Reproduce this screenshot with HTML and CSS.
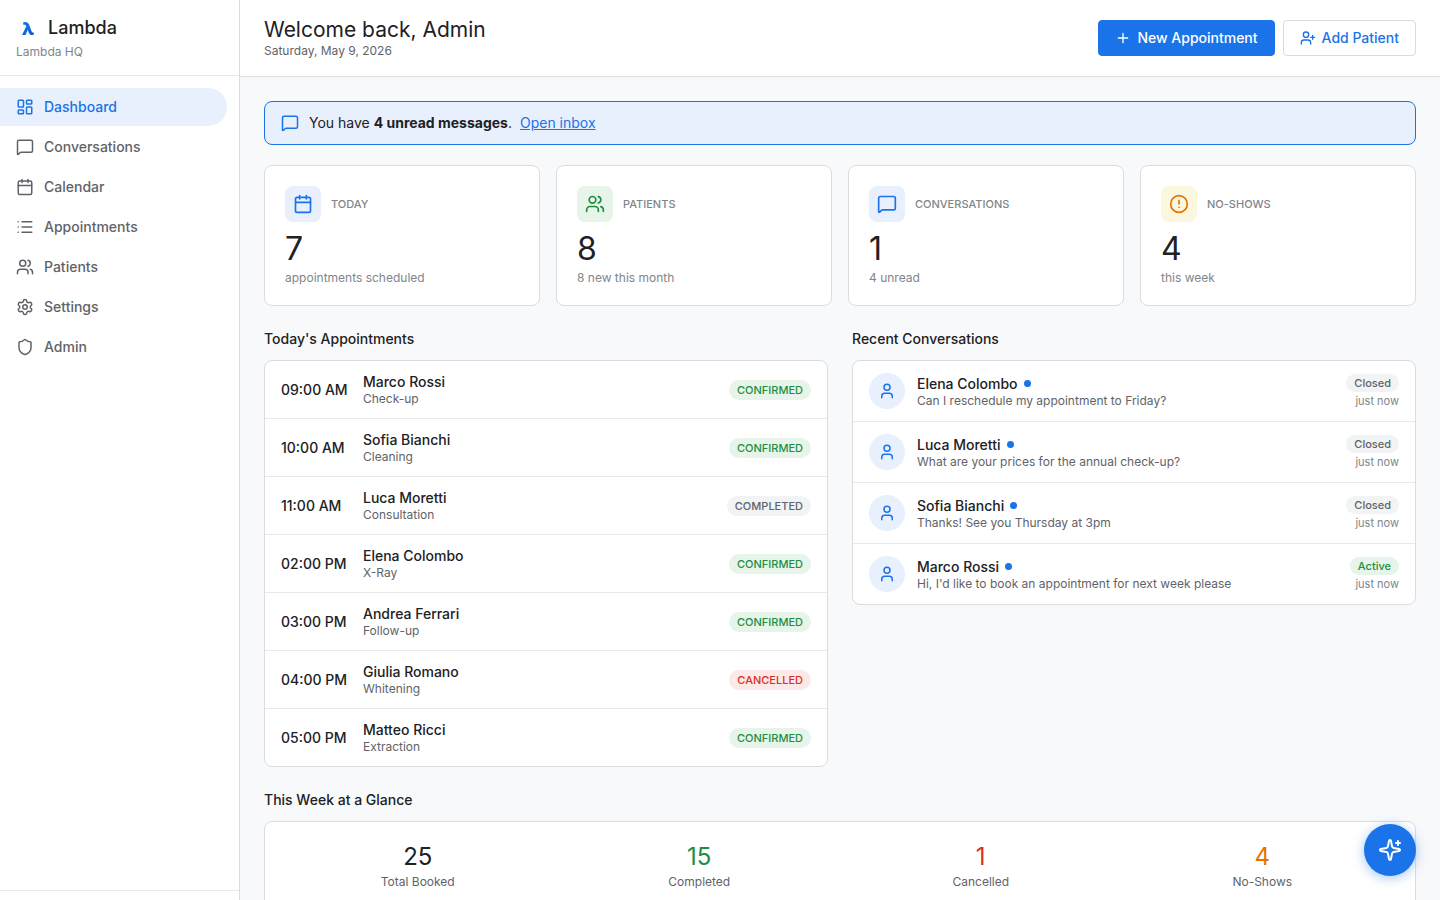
FILE: index.html
```
<!DOCTYPE html>
<html lang="en">
<head>
<meta charset="utf-8">
<meta name="viewport" content="width=device-width, initial-scale=1">
<title>Dashboard - Lambda</title>
<link rel="stylesheet" href="styles.css">
</head>
<body>

<svg class="sprite" aria-hidden="true">
  <symbol id="i-dashboard" viewBox="0 0 24 24"><rect width="7" height="9" x="3" y="3" rx="1"/><rect width="7" height="5" x="14" y="3" rx="1"/><rect width="7" height="9" x="14" y="12" rx="1"/><rect width="7" height="5" x="3" y="16" rx="1"/></symbol>
  <symbol id="i-message" viewBox="0 0 24 24"><path d="M22 17a2 2 0 0 1-2 2H6.828a2 2 0 0 0-1.414.586l-2.202 2.202A.71.71 0 0 1 2 21.286V5a2 2 0 0 1 2-2h16a2 2 0 0 1 2 2z"/></symbol>
  <symbol id="i-calendar" viewBox="0 0 24 24"><path d="M8 2v4M16 2v4M3 10h18"/><rect width="18" height="18" x="3" y="4" rx="2"/></symbol>
  <symbol id="i-list" viewBox="0 0 24 24"><path d="M3 5h.01M3 12h.01M3 19h.01M8 5h13M8 12h13M8 19h13"/></symbol>
  <symbol id="i-users" viewBox="0 0 24 24"><path d="M16 21v-2a4 4 0 0 0-4-4H6a4 4 0 0 0-4 4v2M16 3.128a4 4 0 0 1 0 7.744M22 21v-2a4 4 0 0 0-3-3.87"/><circle cx="9" cy="7" r="4"/></symbol>
  <symbol id="i-settings" viewBox="0 0 24 24"><path d="M9.671 4.136a2.34 2.34 0 0 1 4.659 0 2.34 2.34 0 0 0 3.319 1.915 2.34 2.34 0 0 1 2.33 4.033 2.34 2.34 0 0 0 0 3.831 2.34 2.34 0 0 1-2.33 4.033 2.34 2.34 0 0 0-3.319 1.915 2.34 2.34 0 0 1-4.659 0 2.34 2.34 0 0 0-3.32-1.915 2.34 2.34 0 0 1-2.33-4.033 2.34 2.34 0 0 0 0-3.831A2.34 2.34 0 0 1 6.35 6.051a2.34 2.34 0 0 0 3.319-1.915"/><circle cx="12" cy="12" r="3"/></symbol>
  <symbol id="i-shield" viewBox="0 0 24 24"><path d="M20 13c0 5-3.5 7.5-7.66 8.95a1 1 0 0 1-.67-.01C7.5 20.5 4 18 4 13V6a1 1 0 0 1 1-1c2 0 4.5-1.2 6.24-2.72a1.17 1.17 0 0 1 1.52 0C14.51 3.81 17 5 19 5a1 1 0 0 1 1 1z"/></symbol>
  <symbol id="i-plus" viewBox="0 0 24 24"><path d="M5 12h14M12 5v14"/></symbol>
  <symbol id="i-user-plus" viewBox="0 0 24 24"><path d="M16 21v-2a4 4 0 0 0-4-4H6a4 4 0 0 0-4 4v2M19 8v6M22 11h-6"/><circle cx="9" cy="7" r="4"/></symbol>
  <symbol id="i-user" viewBox="0 0 24 24"><path d="M19 21v-2a4 4 0 0 0-4-4H9a4 4 0 0 0-4 4v2"/><circle cx="12" cy="7" r="4"/></symbol>
  <symbol id="i-alert" viewBox="0 0 24 24"><circle cx="12" cy="12" r="10"/><path d="M12 8v4M12 16h.01"/></symbol>
  <symbol id="i-sparkle" viewBox="0 0 24 24"><path d="M11.017 2.814a1 1 0 0 1 1.966 0l1.051 5.558a2 2 0 0 0 1.594 1.594l5.558 1.051a1 1 0 0 1 0 1.966l-5.558 1.051a2 2 0 0 0-1.594 1.594l-1.051 5.558a1 1 0 0 1-1.966 0l-1.051-5.558a2 2 0 0 0-1.594-1.594l-5.558-1.051a1 1 0 0 1 0-1.966l5.558-1.051a2 2 0 0 0 1.594-1.594zM20 3v4M22 5h-4"/></symbol>
</svg>

<div class="app">
  <aside class="sidebar">
    <div class="sidebar-header">
      <div class="brand"><span class="brand-mark" aria-hidden="true">λ</span><span>Lambda</span></div>
      <div class="brand-org">Lambda HQ</div>
    </div>
    <nav class="nav">
      <a class="nav-item active" href="#"><svg class="icon"><use href="#i-dashboard"/></svg>Dashboard</a>
      <a class="nav-item" href="#"><svg class="icon"><use href="#i-message"/></svg>Conversations</a>
      <a class="nav-item" href="#"><svg class="icon"><use href="#i-calendar"/></svg>Calendar</a>
      <a class="nav-item" href="#"><svg class="icon"><use href="#i-list"/></svg>Appointments</a>
      <a class="nav-item" href="#"><svg class="icon"><use href="#i-users"/></svg>Patients</a>
      <a class="nav-item" href="#"><svg class="icon"><use href="#i-settings"/></svg>Settings</a>
      <a class="nav-item" href="#"><svg class="icon"><use href="#i-shield"/></svg>Admin</a>
    </nav>
    <div class="sidebar-footer"></div>
  </aside>

  <main class="main">
    <header class="topbar">
      <div>
        <h1>Welcome back, Admin</h1>
        <p class="date">Saturday, May 9, 2026</p>
      </div>
      <div class="actions">
        <button class="btn btn-primary" type="button"><svg class="icon"><use href="#i-plus"/></svg>New Appointment</button>
        <button class="btn" type="button"><svg class="icon"><use href="#i-user-plus"/></svg>Add Patient</button>
      </div>
    </header>

    <div class="content">
      <div class="banner">
        <svg class="icon"><use href="#i-message"/></svg>
        <p>You have <strong>4 unread messages</strong>. <a href="#">Open inbox</a></p>
      </div>

      <section class="stats">
        <div class="card stat">
          <div class="stat-head"><span class="stat-icon blue"><svg class="icon"><use href="#i-calendar"/></svg></span><span class="stat-label">Today</span></div>
          <div class="stat-value">7</div>
          <div class="stat-note">appointments scheduled</div>
        </div>
        <div class="card stat">
          <div class="stat-head"><span class="stat-icon green"><svg class="icon"><use href="#i-users"/></svg></span><span class="stat-label">Patients</span></div>
          <div class="stat-value">8</div>
          <div class="stat-note">8 new this month</div>
        </div>
        <div class="card stat">
          <div class="stat-head"><span class="stat-icon blue"><svg class="icon"><use href="#i-message"/></svg></span><span class="stat-label">Conversations</span></div>
          <div class="stat-value">1</div>
          <div class="stat-note">4 unread</div>
        </div>
        <div class="card stat">
          <div class="stat-head"><span class="stat-icon orange"><svg class="icon"><use href="#i-alert"/></svg></span><span class="stat-label">No-Shows</span></div>
          <div class="stat-value">4</div>
          <div class="stat-note">this week</div>
        </div>
      </section>

      <div class="columns">
        <section>
          <h2>Today's Appointments</h2>
          <ul class="card list">
            <li class="row"><span class="time">09:00 AM</span><div class="info"><div class="name">Marco Rossi</div><div class="sub">Check-up</div></div><span class="badge caps green">Confirmed</span></li>
            <li class="row"><span class="time">10:00 AM</span><div class="info"><div class="name">Sofia Bianchi</div><div class="sub">Cleaning</div></div><span class="badge caps green">Confirmed</span></li>
            <li class="row"><span class="time">11:00 AM</span><div class="info"><div class="name">Luca Moretti</div><div class="sub">Consultation</div></div><span class="badge caps gray">Completed</span></li>
            <li class="row"><span class="time">02:00 PM</span><div class="info"><div class="name">Elena Colombo</div><div class="sub">X-Ray</div></div><span class="badge caps green">Confirmed</span></li>
            <li class="row"><span class="time">03:00 PM</span><div class="info"><div class="name">Andrea Ferrari</div><div class="sub">Follow-up</div></div><span class="badge caps green">Confirmed</span></li>
            <li class="row"><span class="time">04:00 PM</span><div class="info"><div class="name">Giulia Romano</div><div class="sub">Whitening</div></div><span class="badge caps red">Cancelled</span></li>
            <li class="row"><span class="time">05:00 PM</span><div class="info"><div class="name">Matteo Ricci</div><div class="sub">Extraction</div></div><span class="badge caps green">Confirmed</span></li>
          </ul>
        </section>

        <section>
          <h2>Recent Conversations</h2>
          <ul class="card list">
            <li class="row"><span class="avatar"><svg class="icon"><use href="#i-user"/></svg></span><div class="info"><div class="name unread">Elena Colombo</div><div class="sub">Can I reschedule my appointment to Friday?</div></div><div class="meta"><span class="badge gray">Closed</span><span class="ago">just now</span></div></li>
            <li class="row"><span class="avatar"><svg class="icon"><use href="#i-user"/></svg></span><div class="info"><div class="name unread">Luca Moretti</div><div class="sub">What are your prices for the annual check-up?</div></div><div class="meta"><span class="badge gray">Closed</span><span class="ago">just now</span></div></li>
            <li class="row"><span class="avatar"><svg class="icon"><use href="#i-user"/></svg></span><div class="info"><div class="name unread">Sofia Bianchi</div><div class="sub">Thanks! See you Thursday at 3pm</div></div><div class="meta"><span class="badge gray">Closed</span><span class="ago">just now</span></div></li>
            <li class="row"><span class="avatar"><svg class="icon"><use href="#i-user"/></svg></span><div class="info"><div class="name unread">Marco Rossi</div><div class="sub">Hi, I'd like to book an appointment for next week please</div></div><div class="meta"><span class="badge green">Active</span><span class="ago">just now</span></div></li>
          </ul>
        </section>
      </div>

      <section>
        <h2>This Week at a Glance</h2>
        <div class="card glance">
          <div><div class="glance-value">25</div><div class="glance-label">Total Booked</div></div>
          <div><div class="glance-value is-green">15</div><div class="glance-label">Completed</div></div>
          <div><div class="glance-value is-red">1</div><div class="glance-label">Cancelled</div></div>
          <div><div class="glance-value is-orange">4</div><div class="glance-label">No-Shows</div></div>
        </div>
      </section>
    </div>
  </main>
</div>

<button class="fab" type="button" aria-label="Assistant"><svg class="icon"><use href="#i-sparkle"/></svg></button>

</body>
</html>
```
FILE: styles.css
```
:root {
  --blue: #1a73e8;
  --blue-bg: #e8f0fe;
  --green: #1e8e3e;
  --green-bg: #e6f4ea;
  --red: #d93025;
  --red-bg: #fce8e6;
  --orange: #e37400;
  --orange-bg: #fef7e0;
  --text: #202124;
  --text-2: #5f6368;
  --text-3: #80868b;
  --border: #dadce0;
  --border-light: #e8eaed;
}

* {
  box-sizing: border-box;
  margin: 0;
  padding: 0;
}

body {
  font-family: Inter, Roboto, sans-serif;
  font-size: 14px;
  line-height: 20px;
  color: var(--text);
  background: #f8f9fb;
}

.sprite {
  display: none;
}

.icon {
  width: 18px;
  height: 18px;
  flex-shrink: 0;
  fill: none;
  stroke: currentColor;
  stroke-width: 2;
  stroke-linecap: round;
  stroke-linejoin: round;
}

.app {
  display: flex;
  min-height: 100vh;
}

/* Sidebar */
.sidebar {
  position: sticky;
  top: 0;
  display: flex;
  flex-direction: column;
  flex-shrink: 0;
  width: 240px;
  height: 100vh;
  background: #fff;
  border-right: 1px solid var(--border);
}

.sidebar-header {
  padding: 16px 16px 15px;
  border-bottom: 1px solid var(--border-light);
}

.brand {
  display: flex;
  align-items: center;
  gap: 8px;
  font-size: 18px;
  font-weight: 500;
  line-height: 24px;
}

.brand-mark {
  width: 24px;
  font-family: "Open Sans", sans-serif;
  font-size: 18px;
  font-weight: 800;
  text-align: center;
  color: transparent;
  background: linear-gradient(135deg, #1a8cff, #0b47b8);
  -webkit-background-clip: text;
  background-clip: text;
}

.brand-org {
  margin-top: 4px;
  font-size: 12px;
  line-height: 16px;
  color: var(--text-3);
}

.nav {
  display: flex;
  flex: 1;
  flex-direction: column;
  gap: 2px;
  padding: 12px 12px 12px 0;
}

.nav-item {
  display: flex;
  align-items: center;
  gap: 10px;
  height: 38px;
  padding: 0 16px;
  border-radius: 0 19px 19px 0;
  font-weight: 500;
  color: var(--text-2);
  text-decoration: none;
}

.nav-item.active {
  color: var(--blue);
  background: var(--blue-bg);
}

.sidebar-footer {
  height: 10px;
  border-top: 1px solid var(--border-light);
}

/* Top bar */
.main {
  flex: 1;
  min-width: 0;
}

.topbar {
  display: flex;
  align-items: center;
  justify-content: space-between;
  padding: 16px 24px 17px;
  background: #fff;
  border-bottom: 1px solid var(--border);
}

h1 {
  font-size: 21px;
  font-weight: 400;
  line-height: 27px;
}

.date {
  font-size: 12px;
  line-height: 16px;
  color: var(--text-2);
}

.actions {
  display: flex;
  gap: 8px;
}

.btn {
  display: flex;
  align-items: center;
  gap: 6px;
  height: 36px;
  padding: 0 16px;
  border: 1px solid var(--border);
  border-radius: 4px;
  font: inherit;
  font-weight: 500;
  color: var(--blue);
  background: #fff;
  cursor: pointer;
}

.btn .icon {
  width: 16px;
  height: 16px;
}

.btn-primary {
  color: #fff;
  background: var(--blue);
  border-color: var(--blue);
}

/* Content */
.content {
  padding: 24px;
}

.card {
  background: #fff;
  border: 1px solid var(--border);
  border-radius: 8px;
}

.banner {
  display: flex;
  align-items: center;
  gap: 10px;
  margin-bottom: 20px;
  padding: 11px 16px;
  border: 1px solid var(--blue);
  border-radius: 8px;
  background: var(--blue-bg);
}

.banner .icon,
.banner a {
  color: var(--blue);
}

.banner a {
  margin-left: 4px;
}

.stats {
  display: grid;
  grid-template-columns: repeat(4, 1fr);
  gap: 16px;
  margin-bottom: 24px;
}

.stat {
  padding: 20px 20px 19px;
}

.stat-head {
  display: flex;
  align-items: center;
  gap: 10px;
}

.stat-icon {
  display: flex;
  align-items: center;
  justify-content: center;
  width: 36px;
  height: 36px;
  border-radius: 8px;
}

.stat-icon .icon {
  width: 20px;
  height: 20px;
}

.stat-label {
  font-size: 11px;
  font-weight: 500;
  text-transform: uppercase;
  color: var(--text-3);
}

.stat-value {
  margin-top: 8px;
  font-size: 32px;
  line-height: 38px;
}

.stat-note {
  margin-top: 2px;
  font-size: 12px;
  line-height: 16px;
  color: var(--text-3);
}

.blue {
  color: var(--blue);
  background: var(--blue-bg);
}

.green {
  color: var(--green);
  background: var(--green-bg);
}

.orange {
  color: var(--orange);
  background: var(--orange-bg);
}

.red {
  color: var(--red);
  background: var(--red-bg);
}

.gray {
  color: var(--text-2);
  background: #f1f3f4;
}

.columns {
  display: grid;
  grid-template-columns: 1fr 1fr;
  align-items: start;
  gap: 24px;
  margin-bottom: 24px;
}

h2 {
  margin-bottom: 12px;
  font-size: 14px;
  font-weight: 500;
  line-height: 18px;
}

.list {
  list-style: none;
}

.row {
  display: flex;
  align-items: center;
  gap: 12px;
  padding: 12px 16px;
}

.row + .row {
  border-top: 1px solid var(--border-light);
}

.time {
  width: 70px;
  font-weight: 500;
  white-space: nowrap;
}

.info {
  flex: 1;
  min-width: 0;
}

.name {
  font-weight: 500;
  line-height: 18px;
}

.sub {
  font-size: 12px;
  line-height: 15px;
  color: var(--text-2);
}

.unread::after {
  content: "";
  display: inline-block;
  width: 7px;
  height: 7px;
  margin-left: 6px;
  border-radius: 50%;
  background: var(--blue);
  vertical-align: 2px;
}

.badge {
  padding: 0 8px;
  border-radius: 10px;
  font-size: 11px;
  font-weight: 500;
  line-height: 18px;
}

.badge.caps {
  line-height: 20px;
  text-transform: uppercase;
}

.avatar {
  display: flex;
  align-items: center;
  justify-content: center;
  width: 36px;
  height: 36px;
  border-radius: 50%;
  color: var(--blue);
  background: var(--blue-bg);
}

.meta {
  display: flex;
  flex-direction: column;
  align-items: flex-end;
  gap: 2px;
}

.ago {
  font-size: 11px;
  line-height: 14px;
  color: var(--text-3);
}

.glance {
  display: grid;
  grid-template-columns: repeat(4, 1fr);
  gap: 16px;
  padding: 20px;
  text-align: center;
}

.glance-value {
  font-size: 24px;
  line-height: 30px;
}

.glance-value.is-green { color: var(--green); }
.glance-value.is-red { color: var(--red); }
.glance-value.is-orange { color: var(--orange); }

.glance-label {
  margin-top: 2px;
  font-size: 12px;
  line-height: 16px;
  color: var(--text-2);
}

.fab {
  position: fixed;
  right: 24px;
  bottom: 24px;
  display: flex;
  align-items: center;
  justify-content: center;
  width: 52px;
  height: 52px;
  border: 0;
  border-radius: 50%;
  color: #fff;
  background: var(--blue);
  box-shadow: 0 2px 12px rgba(26, 115, 232, 0.4);
  cursor: pointer;
}

.fab .icon {
  width: 24px;
  height: 24px;
}
```
